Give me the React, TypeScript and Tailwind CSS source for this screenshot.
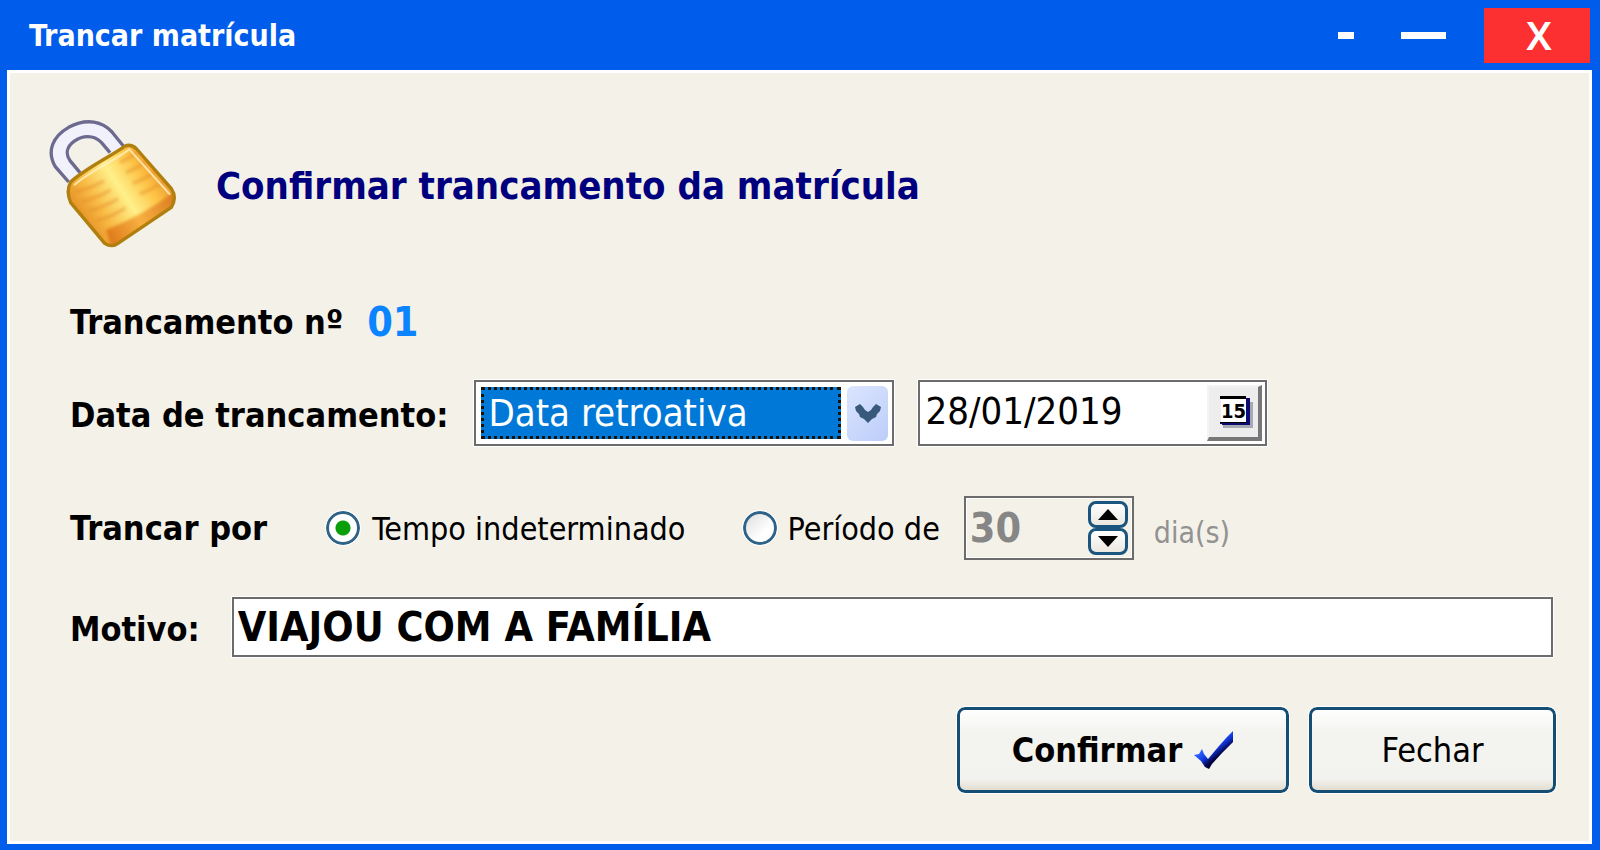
import { useState } from 'react';

function LockIcon() {
  return (
    <svg viewBox="147 360 384 384" className="h-32 w-32 shrink-0" aria-hidden="true">
      <defs>
        <linearGradient id="gold" gradientUnits="userSpaceOnUse" x1="255" y1="650" x2="480" y2="500">
          <stop offset="0" stopColor="#e99a2c" />
          <stop offset="0.2" stopColor="#f9bb45" />
          <stop offset="0.5" stopColor="#fff08a" />
          <stop offset="0.78" stopColor="#fdc244" />
          <stop offset="1" stopColor="#eb9530" />
        </linearGradient>
        <linearGradient id="band" gradientUnits="userSpaceOnUse" x1="330" y1="700" x2="515" y2="590">
          <stop offset="0" stopColor="#e07f1e" />
          <stop offset="0.45" stopColor="#f7b040" />
          <stop offset="1" stopColor="#dc7f22" />
        </linearGradient>
        <filter id="soft" x="-20%" y="-20%" width="140%" height="140%">
          <feGaussianBlur stdDeviation="4" />
        </filter>
        <clipPath id="body">
          <path d="M212 546 C250 510 320 476 374 439 Q392 430 410 447 L514 566 Q532 592 514 622 L354 730 Q335 744 314 730 L212 608 Q197 574 212 546Z" />
        </clipPath>
      </defs>
      <path d="M208 550 L166 500 C138 452 160 408 206 382 C262 352 308 366 336 396 L370 438 L330 458 L304 427 C280 404 248 406 222 424 C200 440 196 462 210 482 L240 518Z" fill="#f1f1fb" />
      <path d="M206 546 L166 500 C138 452 160 408 206 382 C262 352 308 366 336 396 L370 438 M330 458 L304 427 C280 404 248 406 222 424 C200 440 196 462 210 482 L240 518" fill="none" stroke="#6d6a90" strokeWidth="10" />
      <path d="M212 546 C250 510 320 476 374 439 Q392 430 410 447 L514 566 Q532 592 514 622 L354 730 Q335 744 314 730 L212 608 Q197 574 212 546Z" fill="url(#gold)" />
      <g clipPath="url(#body)">
        <path d="M318 690 Q430 646 524 574 L535 630 L335 750Z" fill="url(#band)" filter="url(#soft)" />
        <g fill="none" stroke="#e28a2a" strokeWidth="9" opacity="0.5" filter="url(#soft)">
          <path d="M226 574 Q272 566 312 542" />
          <path d="M246 604 Q292 594 332 570" />
          <path d="M268 632 Q310 622 354 596" />
          <path d="M290 662 Q336 650 376 624" />
          <path d="M360 486 Q388 476 412 456" />
          <path d="M378 518 Q410 506 440 484" />
          <path d="M398 550 Q434 538 468 514" />
          <path d="M420 582 Q458 568 494 544" />
        </g>
        <path d="M222 556 C262 518 334 488 388 448 L510 584" fill="none" stroke="#fff0c0" strokeWidth="6" opacity="0.8" />
      </g>
      <path d="M212 546 C250 510 320 476 374 439 Q392 430 410 447 L514 566 Q532 592 514 622 L354 730 Q335 744 314 730 L212 608 Q197 574 212 546Z" fill="none" stroke="#b07f0e" strokeWidth="10" strokeLinejoin="round" />
    </svg>
  );
}

function CheckIcon() {
  return (
    <svg viewBox="0 0 40 38" className="h-[38px] w-10" aria-hidden="true">
      <defs>
        <linearGradient id="tick" gradientUnits="userSpaceOnUse" x1="18" y1="12" x2="27" y2="23">
          <stop offset="0" stopColor="#2b62ff" />
          <stop offset="0.5" stopColor="#1238e0" />
          <stop offset="1" stopColor="#02023c" />
        </linearGradient>
      </defs>
      <path d="M0 24 L5 23 L8 18 L10 23 L14 28 L25 15 L33 6 L39 0 L39 11 L28 22 L18 33 L15 38 L11 36 L7 30Z" fill="url(#tick)" />
    </svg>
  );
}

function CalendarIcon() {
  return (
    <svg viewBox="0 0 34 34" className="h-[34px] w-[34px]" aria-hidden="true">
      <path d="M4 30 H31 V7 H34 V33 H4Z" fill="#a9a9b4" />
      <rect x="2" y="3" width="25" height="25" fill="#fff" />
      <path d="M1 1 H27 V4 H1Z" fill="#000" />
      <path d="M27 3 H31 V30 H3 V29 H1 V27 H27Z" fill="#0b0b72" />
      <path d="M1 27 H27 V28 H1Z" fill="#000" />
      <text x="2" y="23" fontSize="20" fontWeight="700" fontFamily="DejaVu Sans Condensed, sans-serif" fill="#000">15</text>
    </svg>
  );
}

const label = 'font-bold text-[34px] leading-[48px] whitespace-nowrap';
const radio =
  'h-[34px] w-[34px] shrink-0 appearance-none rounded-full border-3 border-[#2f6488] bg-[linear-gradient(135deg,#dedede,#fff_65%)] checked:bg-[radial-gradient(circle,#0a9f0a_0_7px,#fff_8px)] outline-1 outline-white';
const push =
  'flex h-[86px] items-center justify-center gap-3 rounded-lg border-3 border-[#144e75] bg-[linear-gradient(#ffffff,#f3f3ef_30%,#f2f2ee_86%,#e3ddd0)] text-[34px] outline-1 outline-white';
const spin =
  'flex h-[27px] w-10 items-center justify-center rounded-lg border-3 border-[#1a5580] bg-[linear-gradient(#fff,#ebe8e0)]';

export default function App() {
  const [mode, setMode] = useState('indeterminado');
  const [days, setDays] = useState(30);
  const [date, setDate] = useState('28/01/2019');
  const [reason, setReason] = useState('VIAJOU COM A FAMÍLIA');

  return (
    <div className="flex min-h-screen flex-col bg-[#005cea] pr-2 pb-2 pl-[7px] font-['DejaVu_Sans_Condensed','DejaVu_Sans',sans-serif] text-black">
      <header className="flex h-[70px] items-center pl-[22px]">
        <h1 className="text-[30px] font-bold text-white">Trancar matrícula</h1>
        <div className="ml-auto flex items-center pr-[2px]">
          <button type="button" aria-label="Minimizar" className="flex h-[55px] w-16 items-center justify-center">
            <span className="h-[7px] w-4 bg-white" />
          </button>
          <button type="button" aria-label="Maximizar" className="mr-4 flex h-[55px] w-[90px] items-center justify-center">
            <span className="h-[7px] w-[45px] bg-white" />
          </button>
          <button type="button" aria-label="Fechar janela" className="h-[55px] w-[106px] bg-[#fc3030] pl-1 font-['Noto_Sans',sans-serif] text-[40px] leading-[52px] font-semibold text-white">
            X
          </button>
        </div>
      </header>

      <main className="flex grow flex-col border-3 border-white bg-[#f4f1e9] pr-[29px] pl-[60px]">
        <div className="-ml-[21px] flex items-center gap-[39px] pt-[47px]">
          <LockIcon />
          <h2 className="pt-1 text-[38px] font-bold text-[#00007f]">Confirmar trancamento da matrícula</h2>
        </div>

        <div className="mt-[50px] flex h-12 items-center gap-6">
          <span className={label}>Trancamento nº</span>
          <output className="text-[41px] leading-[48px] font-bold text-[#0a84ff]">01</output>
        </div>

        <div className="mt-[34px] flex items-center gap-6">
          <label htmlFor="tipo" className={`${label} pt-1 pr-[2px]`}>Data de trancamento:</label>
          <div className="flex h-[66px] w-[420px] items-center gap-[6px] border-2 border-[#6c6c6c] bg-white py-[3px] pr-1 pl-[5px] outline-1 outline-white">
            <select id="tipo" className="h-[52px] grow appearance-none border-3 border-dotted border-[#1c1208] bg-[#0078d7] pl-1 text-[38px] leading-[46px] text-white">
              <option>Data retroativa</option>
              <option>Data atual</option>
            </select>
            <span className="flex h-[55px] w-[41px] items-center justify-center rounded-md bg-[linear-gradient(135deg,#dbe5ff,#bccdf9)]">
              <svg viewBox="0 0 28 20" className="h-5 w-7" aria-hidden="true">
                <path d="M1 4 L6 1 L9 4 L11 7 L14 9 L17 7 L19 4 L22 1 L27 4 L26 8 L23 11 L22 14 L18 16 L14 20 L10 16 L6 14 L5 11 L2 8Z" fill="#38597a" />
              </svg>
            </span>
          </div>
          <div className="flex h-[66px] w-[349px] items-center border-2 border-[#6c6c6c] bg-white py-1 pr-[3px] pl-[5px] outline-1 outline-white">
            <input aria-label="Data" value={date} onChange={(e) => setDate(e.target.value)} className="mb-1 w-full min-w-0 bg-transparent text-[38px] leading-[46px] outline-none" />
            <button type="button" aria-label="Abrir calendário" className="flex h-[56px] w-[55px] shrink-0 items-center justify-center border-t-2 border-r-4 border-b-4 border-l-2 border-t-[#f4f4f4] border-r-[#77777a] border-b-[#77777a] border-l-[#f4f4f4] bg-[#ededed] pl-1">
              <CalendarIcon />
            </button>
          </div>
        </div>

        <div className="mt-[50px] flex items-center">
          <span id="por" className={label}>Trancar por</span>
          <div role="radiogroup" aria-labelledby="por" className="ml-[59px] flex items-center">
            <input id="ind" type="radio" name="modo" checked={mode === 'indeterminado'} onChange={() => setMode('indeterminado')} className={radio} />
            <label htmlFor="ind" className="pt-[2px] pl-3 text-[32px] whitespace-nowrap">Tempo indeterminado</label>
            <input id="per" type="radio" name="modo" checked={mode === 'periodo'} onChange={() => setMode('periodo')} className={`${radio} ml-[58px]`} />
            <label htmlFor="per" className="pt-[2px] pl-[10px] text-[32px] whitespace-nowrap">Período de</label>
          </div>
          <div className="ml-6 flex h-16 w-[170px] items-center border-2 border-[#6c6c6c] pr-1 pl-1 inset-ring inset-ring-white">
            <input aria-label="Dias" disabled={mode !== 'periodo'} value={days} onChange={(e) => setDays(Number(e.target.value) || 0)} className="w-full min-w-0 bg-transparent text-[41px] leading-[48px] font-bold outline-none disabled:text-[#868686]" />
            <div className="flex shrink-0 flex-col">
              <button type="button" aria-label="Aumentar dias" onClick={() => setDays(days + 1)} className={spin}>
                <svg viewBox="0 0 20 11" className="h-[11px] w-5" aria-hidden="true"><path d="M0 11 L10 0 L20 11Z" /></svg>
              </button>
              <button type="button" aria-label="Diminuir dias" onClick={() => setDays(days - 1)} className={spin}>
                <svg viewBox="0 0 20 11" className="h-[11px] w-5" aria-hidden="true"><path d="M0 0 L20 0 L10 11Z" /></svg>
              </button>
            </div>
          </div>
          <span className="pt-2 pl-5 text-[30px] text-[#929292]">dia(s)</span>
        </div>

        <div className="mt-[37px] flex items-center gap-8 pr-[7px]">
          <label htmlFor="motivo" className={`${label} pt-1`}>Motivo:</label>
          <input id="motivo" value={reason} onChange={(e) => setReason(e.target.value)} className="h-[60px] min-w-0 grow border-2 border-[#6c6c6c] bg-white pl-1 text-[41px] leading-[48px] font-bold outline-1 outline-white" />
        </div>

        <div className="mt-[50px] flex justify-end gap-5 pr-1 pb-12">
          <button type="button" className={`${push} w-[332px] font-bold`}>
            Confirmar
            <CheckIcon />
          </button>
          <button type="button" className={`${push} w-[247px]`}>Fechar</button>
        </div>
      </main>
    </div>
  );
}
